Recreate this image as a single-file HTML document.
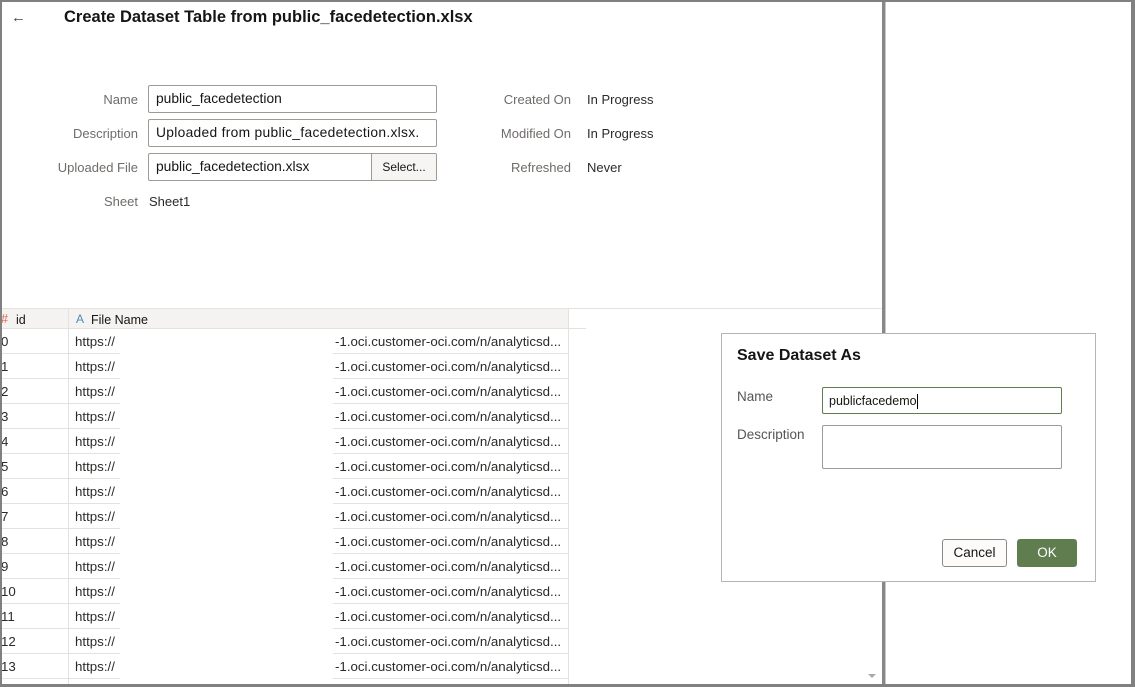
<!DOCTYPE html>
<html><head><meta charset="utf-8"><style>
*{box-sizing:border-box;margin:0;padding:0}
body{width:1135px;height:687px;position:relative;background:#fff;font-family:"Liberation Sans",sans-serif;font-size:13px;color:#161513;overflow:hidden}
.a{position:absolute}
.f{position:absolute;z-index:10;background:#808080}
.lbl{position:absolute;color:#6f6c69;font-size:13px;text-align:right}
.val{position:absolute;font-size:13px;color:#2b2a28}
.inp{position:absolute;border:1px solid #9e9a95;border-radius:2px;background:#fff;font-size:13.8px;padding-left:7px;line-height:26px;color:#161513;overflow:hidden;white-space:nowrap}
.row{position:absolute;left:0;width:568px;height:25px;font-size:13.3px;color:#2b2a28}
.row .id{position:absolute;left:1px;top:5px}
.row .l1{position:absolute;left:68px;width:52px;bottom:0;height:1px;background:#e4e2df}
.row .l2{position:absolute;left:333px;width:235px;bottom:0;height:1px;background:#e4e2df}
.row .l0{position:absolute;left:0;width:68px;bottom:0;height:1px;background:#e4e2df}
.row .vl{position:absolute;left:68px;top:0;width:1px;height:25px;background:#e4e2df}
.row .vr{position:absolute;left:568px;top:0;width:1px;height:25px;background:#e4e2df}
.row .h{position:absolute;left:75px;top:5px}
.row .t{position:absolute;left:335px;top:5px;white-space:nowrap}
</style></head><body>
<!-- frame -->
<div class="f" style="left:0;top:0;width:1135px;height:2px"></div>
<div class="f" style="left:0;top:0;width:2px;height:687px"></div>
<div class="f" style="left:0;top:684px;width:1135px;height:3px"></div>
<div class="f" style="left:1131px;top:0;width:4px;height:687px"></div>
<div class="a" style="left:882px;top:0;width:3px;height:687px;background:#888"></div>
<div class="a" style="left:885px;top:0;width:1px;height:687px;background:#c8c8c8"></div>

<div class="a" style="left:11px;top:9px;font-size:15px;color:#444">←</div>
<div class="a" style="left:64px;top:8px;font-size:16.5px;font-weight:bold">Create Dataset Table from public_facedetection.xlsx</div>

<div class="lbl" style="left:40px;width:98px;top:92px">Name</div>
<div class="inp" style="left:148px;top:85px;width:289px;height:28px">public_facedetection</div>
<div class="lbl" style="left:40px;width:98px;top:126px">Description</div>
<div class="inp" style="left:148px;top:119px;width:289px;height:28px;letter-spacing:0.3px">Uploaded from public_facedetection.xlsx.</div>
<div class="lbl" style="left:30px;width:108px;top:160px">Uploaded File</div>
<div class="inp" style="left:148px;top:153px;width:289px;height:28px">public_facedetection.xlsx</div>
<div class="a" style="left:371px;top:154px;width:65px;height:26px;background:#f6f5f3;border-left:1px solid #9e9a95;font-size:12px;line-height:26px;text-align:center">Select...</div>
<div class="lbl" style="left:40px;width:98px;top:194px">Sheet</div>
<div class="val" style="left:149px;top:194px">Sheet1</div>

<div class="lbl" style="left:460px;width:111px;top:92px">Created On</div>
<div class="val" style="left:587px;top:92px">In Progress</div>
<div class="lbl" style="left:460px;width:111px;top:126px">Modified On</div>
<div class="val" style="left:587px;top:126px">In Progress</div>
<div class="lbl" style="left:460px;width:111px;top:160px">Refreshed</div>
<div class="val" style="left:587px;top:160px">Never</div>

<!-- table header -->
<div class="a" style="left:2px;top:308px;width:880px;height:1px;background:#e4e2df"></div>
<div class="a" style="left:0;top:309px;width:568px;height:19px;background:#f4f3f1"></div>
<div class="a" style="left:568px;top:328px;width:18px;height:1px;background:#e4e2df"></div>
<div class="a" style="left:0;top:328px;width:568px;height:1px;background:#e4e2df"></div>
<div class="a" style="left:68px;top:309px;width:1px;height:20px;background:#e4e2df"></div>
<div class="a" style="left:568px;top:309px;width:1px;height:20px;background:#e4e2df"></div>
<div class="a" style="left:1px;top:312px;font-size:12.5px;color:#e0604a">#</div>
<div class="a" style="left:16px;top:313px;font-size:12.5px">id</div>
<div class="a" style="left:76px;top:312px;font-size:12px;color:#4c8db5">A</div>
<div class="a" style="left:91px;top:313px;font-size:12.5px">File Name</div>

<div class="row" style="top:329px"><div class="id">0</div><div class="h">https://</div><div class="t">-1.oci.customer-oci.com/n/analyticsd...</div><div class="l0"></div><div class="l1"></div><div class="l2"></div><div class="vl"></div><div class="vr"></div></div>
<div class="row" style="top:354px"><div class="id">1</div><div class="h">https://</div><div class="t">-1.oci.customer-oci.com/n/analyticsd...</div><div class="l0"></div><div class="l1"></div><div class="l2"></div><div class="vl"></div><div class="vr"></div></div>
<div class="row" style="top:379px"><div class="id">2</div><div class="h">https://</div><div class="t">-1.oci.customer-oci.com/n/analyticsd...</div><div class="l0"></div><div class="l1"></div><div class="l2"></div><div class="vl"></div><div class="vr"></div></div>
<div class="row" style="top:404px"><div class="id">3</div><div class="h">https://</div><div class="t">-1.oci.customer-oci.com/n/analyticsd...</div><div class="l0"></div><div class="l1"></div><div class="l2"></div><div class="vl"></div><div class="vr"></div></div>
<div class="row" style="top:429px"><div class="id">4</div><div class="h">https://</div><div class="t">-1.oci.customer-oci.com/n/analyticsd...</div><div class="l0"></div><div class="l1"></div><div class="l2"></div><div class="vl"></div><div class="vr"></div></div>
<div class="row" style="top:454px"><div class="id">5</div><div class="h">https://</div><div class="t">-1.oci.customer-oci.com/n/analyticsd...</div><div class="l0"></div><div class="l1"></div><div class="l2"></div><div class="vl"></div><div class="vr"></div></div>
<div class="row" style="top:479px"><div class="id">6</div><div class="h">https://</div><div class="t">-1.oci.customer-oci.com/n/analyticsd...</div><div class="l0"></div><div class="l1"></div><div class="l2"></div><div class="vl"></div><div class="vr"></div></div>
<div class="row" style="top:504px"><div class="id">7</div><div class="h">https://</div><div class="t">-1.oci.customer-oci.com/n/analyticsd...</div><div class="l0"></div><div class="l1"></div><div class="l2"></div><div class="vl"></div><div class="vr"></div></div>
<div class="row" style="top:529px"><div class="id">8</div><div class="h">https://</div><div class="t">-1.oci.customer-oci.com/n/analyticsd...</div><div class="l0"></div><div class="l1"></div><div class="l2"></div><div class="vl"></div><div class="vr"></div></div>
<div class="row" style="top:554px"><div class="id">9</div><div class="h">https://</div><div class="t">-1.oci.customer-oci.com/n/analyticsd...</div><div class="l0"></div><div class="l1"></div><div class="l2"></div><div class="vl"></div><div class="vr"></div></div>
<div class="row" style="top:579px"><div class="id">10</div><div class="h">https://</div><div class="t">-1.oci.customer-oci.com/n/analyticsd...</div><div class="l0"></div><div class="l1"></div><div class="l2"></div><div class="vl"></div><div class="vr"></div></div>
<div class="row" style="top:604px"><div class="id">11</div><div class="h">https://</div><div class="t">-1.oci.customer-oci.com/n/analyticsd...</div><div class="l0"></div><div class="l1"></div><div class="l2"></div><div class="vl"></div><div class="vr"></div></div>
<div class="row" style="top:629px"><div class="id">12</div><div class="h">https://</div><div class="t">-1.oci.customer-oci.com/n/analyticsd...</div><div class="l0"></div><div class="l1"></div><div class="l2"></div><div class="vl"></div><div class="vr"></div></div>
<div class="row" style="top:654px"><div class="id">13</div><div class="h">https://</div><div class="t">-1.oci.customer-oci.com/n/analyticsd...</div><div class="l0"></div><div class="l1"></div><div class="l2"></div><div class="vl"></div><div class="vr"></div></div>
<div class="row" style="top:679px;height:5px"><div class="vl" style="height:5px"></div><div class="vr" style="height:5px"></div></div>
<div class="a" style="left:868px;top:674px;width:0;height:0;border-left:4px solid transparent;border-right:4px solid transparent;border-top:4px solid #aaa"></div>

<!-- dialog -->
<div class="a" style="left:721px;top:333px;width:375px;height:249px;background:#fff;border:1px solid #b5b5b5;z-index:5"></div>
<div style="position:absolute;left:0;top:0;z-index:6">
<div class="a" style="left:737px;top:347px;font-size:16px;font-weight:bold;white-space:nowrap">Save Dataset As</div>
<div class="a" style="left:737px;top:389px;font-size:13.5px;color:#555">Name</div>
<div class="a" style="left:822px;top:387px;width:240px;height:27px;border:1px solid #5e7e4d;border-radius:2px;font-size:12.5px;line-height:26px;padding-left:6px;white-space:nowrap">publicfacedemo<span style="display:inline-block;width:1px;height:15px;background:#000;vertical-align:middle"></span></div>
<div class="a" style="left:737px;top:427px;font-size:13.5px;color:#555;white-space:nowrap">Description</div>
<div class="a" style="left:822px;top:425px;width:240px;height:44px;border:1px solid #9e9a95;border-radius:2px"></div>
<div class="a" style="left:942px;top:539px;width:65px;height:28px;border:1px solid #8c8a87;border-radius:3px;background:#fcfbfa;font-size:13.5px;line-height:26px;text-align:center">Cancel</div>
<div class="a" style="left:1017px;top:539px;width:60px;height:28px;border-radius:3px;background:#5f7d4f;color:#fff;font-size:13.5px;line-height:28px;text-align:center">OK</div>
</div>
</body></html>
